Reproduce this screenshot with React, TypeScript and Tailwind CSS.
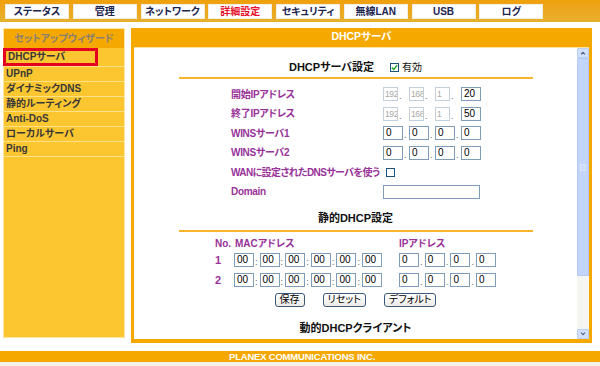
const tabs = ["ステータス", "管理", "ネットワーク", "詳細設定", "セキュリティ", "無線LAN", "USB", "ログ"];
const menu = ["UPnP", "ダイナミックDNS", "静的ルーティング", "Anti-DoS", "ローカルサーバ", "Ping"];

function Box({ value, disabled = false, w = 20, sep = "", sepW = 6 }: { value: string; disabled?: boolean; w?: number; sep?: string; sepW?: number }) {
  return (
    <div className="flex items-end">
      <div
        className={`h-[14px] overflow-hidden whitespace-nowrap border bg-white ${
          disabled
            ? "border-[#c3cfdb] pl-px text-[8.5px] leading-[12px] tracking-[-0.4px] text-[#a8a8a8]"
            : "border-[#7f9db9] pl-[2px] text-[10px] leading-[12px] text-black"
        }`}
        style={{ width: w }}
      >
        {value}
      </div>
      {sep && (
        <span className="text-[9px] leading-[10px] text-[#666]" style={{ width: sepW, paddingLeft: 1 }}>
          {sep}
        </span>
      )}
    </div>
  );
}

function IpRow({ values, fixed = 0 }: { values: string[]; fixed?: number }) {
  return (
    <div className="flex items-center">
      {values.map((v, i) => {
        const dis = i < fixed;
        const w = dis ? 15 : 20;
        return <Box key={i} value={v} disabled={dis} w={w} sep={i < 3 ? "." : ""} sepW={26 - w} />;
      })}
    </div>
  );
}

function Check({ checked }: { checked: boolean }) {
  return (
    <div className="flex h-[9px] w-[9px] items-center justify-center border border-[#1c5180] bg-white">
      {checked && (
        <svg viewBox="0 0 9 9" className="h-[7px] w-[7px]">
          <path d="M1 4.5 L3.5 7 L8 1.5" fill="none" stroke="#21a121" strokeWidth="1.8" />
        </svg>
      )}
    </div>
  );
}

function Label({ children, tight = false }: { children: React.ReactNode; tight?: boolean }) {
  return (
    <div
      className={`w-[152px] shrink-0 whitespace-nowrap text-[10px] font-bold text-[#993399] ${
        tight ? "tracking-[-0.6px]" : "tracking-[-0.3px]"
      }`}
    >
      {children}
    </div>
  );
}

function Btn({ children }: { children: React.ReactNode }) {
  return (
    <div className="flex h-[14px] items-center rounded-[3px] border border-[#3c5a7c] bg-gradient-to-b from-white to-[#ecebe6] px-[4px] text-[10px] leading-none text-black">
      {children}
    </div>
  );
}

function Scrollbar() {
  return (
    <div className="flex w-[12px] flex-col bg-[#f5f5f1]">
      <div className="flex h-[10px] items-center justify-center rounded-[1px] border border-[#b9cdf5] bg-[#d2e0fb]">
        <svg viewBox="0 0 8 6" className="h-[4px] w-[6px]">
          <path d="M1 5 L4 2 L7 5" fill="none" stroke="#4d6185" strokeWidth="1.6" />
        </svg>
      </div>
      <div className="flex h-[218px] items-center justify-center rounded-[1px] border border-[#b3c8f2] bg-[#c3d5fb]">
        <div className="h-[7px] w-[6px] border border-[#dce7fd] bg-[#cddcfb]" />
      </div>
      <div className="flex-1" />
      <div className="flex h-[10px] items-center justify-center rounded-[1px] border border-[#b9cdf5] bg-[#d2e0fb]">
        <svg viewBox="0 0 8 6" className="h-[4px] w-[6px]">
          <path d="M1 1 L4 4 L7 1" fill="none" stroke="#4d6185" strokeWidth="1.6" />
        </svg>
      </div>
    </div>
  );
}

export default function App() {
  const font = "font-['Liberation_Sans','Noto_Sans_CJK_JP',sans-serif] [font-feature-settings:'palt']";
  const macs = ["00", "00", "00", "00", "00", "00"];
  const zeros = ["0", "0", "0", "0"];

  return (
    <div className={`h-[366px] w-[600px] overflow-hidden bg-white ${font}`}>
      {/* top tabs */}
      <div className="flex h-[22px] gap-[3.75px] bg-gradient-to-b from-[#f0a00c] to-[#e6b02c] pl-[5px] pt-[4px]">
        {tabs.map((t) => (
          <div
            key={t}
            className={`h-[15px] w-[64px] border border-[#f3eee0] bg-white text-center text-[10px] font-bold leading-[13px] ${
              t === "詳細設定" ? "text-[#e8102a]" : "text-[#1c2450]"
            }`}
          >
            {t}
          </div>
        ))}
      </div>

      <div className="mt-[6px] flex h-[315px]">
        {/* sidebar */}
        <div className="ml-[3px] flex h-[310px] w-[122px] flex-col border border-[#fde6a2] bg-[#fcc630]">
          <div className="h-[19px] bg-[#f5a800] text-center text-[10px] font-bold leading-[19px] text-[#8b8070]">
            セットアップウィザード
          </div>
          <div className="h-[19px] border-b border-[#fde28a]">
            <div className="-ml-px h-[18px] w-[95px] border-[3px] border-[#e60020] pl-[2px] text-[10px] font-bold leading-[12px] text-[#383838]">
              DHCPサーバ
            </div>
          </div>
          {menu.map((m) => (
            <div key={m} className="h-[15px] border-b border-[#fde28a] pl-[2px] text-[10px] font-bold leading-[14px] text-[#383838]">
              {m}
            </div>
          ))}
        </div>

        {/* main panel */}
        <div className="ml-[6px] flex h-[315px] w-[461px] flex-col bg-[#f5a800] px-[3px] pb-[4px]">
          <div className="h-[17px] text-center text-[10.5px] font-bold leading-[17px] text-white">DHCPサーバ</div>
          <div className="mt-[2px] flex flex-1 overflow-hidden border-t border-[#fce4a8] bg-white">
            <div className="flex-1 overflow-hidden text-[#111]">
              {/* DHCP server settings */}
              <div className="mt-[12px] flex h-[14px] items-center justify-center gap-[16px]">
                <span className="text-[11px] font-bold">DHCPサーバ設定</span>
                <div className="flex items-center gap-[3px]">
                  <Check checked />
                  <span className="text-[10px]">有効</span>
                </div>
              </div>
              <div className="mx-auto mt-[3px] h-[2px] w-[354px] bg-[#f8b42c]" />

              <div className="ml-[97px] mt-[5.5px] flex flex-col">
                <div className="flex h-[19.5px] items-center">
                  <Label>開始IPアドレス</Label>
                  <IpRow values={["192", "168", "1", "20"]} fixed={3} />
                </div>
                <div className="flex h-[19.5px] items-center">
                  <Label>終了IPアドレス</Label>
                  <IpRow values={["192", "168", "1", "50"]} fixed={3} />
                </div>
                <div className="flex h-[19.5px] items-center">
                  <Label>WINSサーバ1</Label>
                  <IpRow values={zeros} />
                </div>
                <div className="flex h-[19.5px] items-center">
                  <Label>WINSサーバ2</Label>
                  <IpRow values={zeros} />
                </div>
                <div className="flex h-[19.5px] items-center">
                  <Label tight>WANに設定されたDNSサーバを使う</Label>
                  <div className="ml-[3px]">
                    <Check checked={false} />
                  </div>
                </div>
                <div className="flex h-[19.5px] items-center">
                  <Label>Domain</Label>
                  <div className="h-[14px] w-[97px] border border-[#7f9db9] bg-white" />
                </div>
              </div>

              {/* static DHCP */}
              <div className="mt-[9.5px] h-[14px] text-center text-[11px] font-bold leading-[14px]">静的DHCP設定</div>
              <div className="mx-auto mt-[5px] h-[2px] w-[354px] bg-[#f8b42c]" />

              <div className="ml-[81px] mt-[4px] flex flex-col text-[10px] font-bold text-[#993399]">
                <div className="flex h-[14px] items-center">
                  <span className="w-[19px]">No.</span>
                  <span className="w-[165px] pl-px">MACアドレス</span>
                  <span>IPアドレス</span>
                </div>
                {["1", "2"].map((n) => (
                  <div key={n} className="flex h-[20px] items-center">
                    <span className="w-[19px] text-[11px]">{n}</span>
                    <div className="flex w-[165px] items-center font-normal">
                      {macs.map((v, i) => (
                        <Box key={i} value={v} sep={i < 5 ? ":" : ""} sepW={5.6} />
                      ))}
                    </div>
                    <div className="flex items-center font-normal">
                      {zeros.map((v, i) => (
                        <Box key={i} value={v} sep={i < 3 ? "." : ""} sepW={5.7} />
                      ))}
                    </div>
                  </div>
                ))}
              </div>

              <div className="mt-[3px] flex justify-center gap-[18px]">
                <Btn>保存</Btn>
                <Btn>リセット</Btn>
                <Btn>デフォルト</Btn>
              </div>

              <div className="mt-[13.5px] h-[14px] text-center text-[11px] font-bold leading-[14px]">動的DHCPクライアント</div>
            </div>
            <Scrollbar />
          </div>
        </div>
      </div>

      {/* footer */}
      <div className="mt-[8px] h-[11px] bg-[#f5a800] pl-[229px] text-[9.5px] font-bold leading-[11px] tracking-[-0.2px] text-white">
        PLANEX COMMUNICATIONS INC.
      </div>
      <div className="h-[10px] bg-[#f4f2ec]" />
    </div>
  );
}
